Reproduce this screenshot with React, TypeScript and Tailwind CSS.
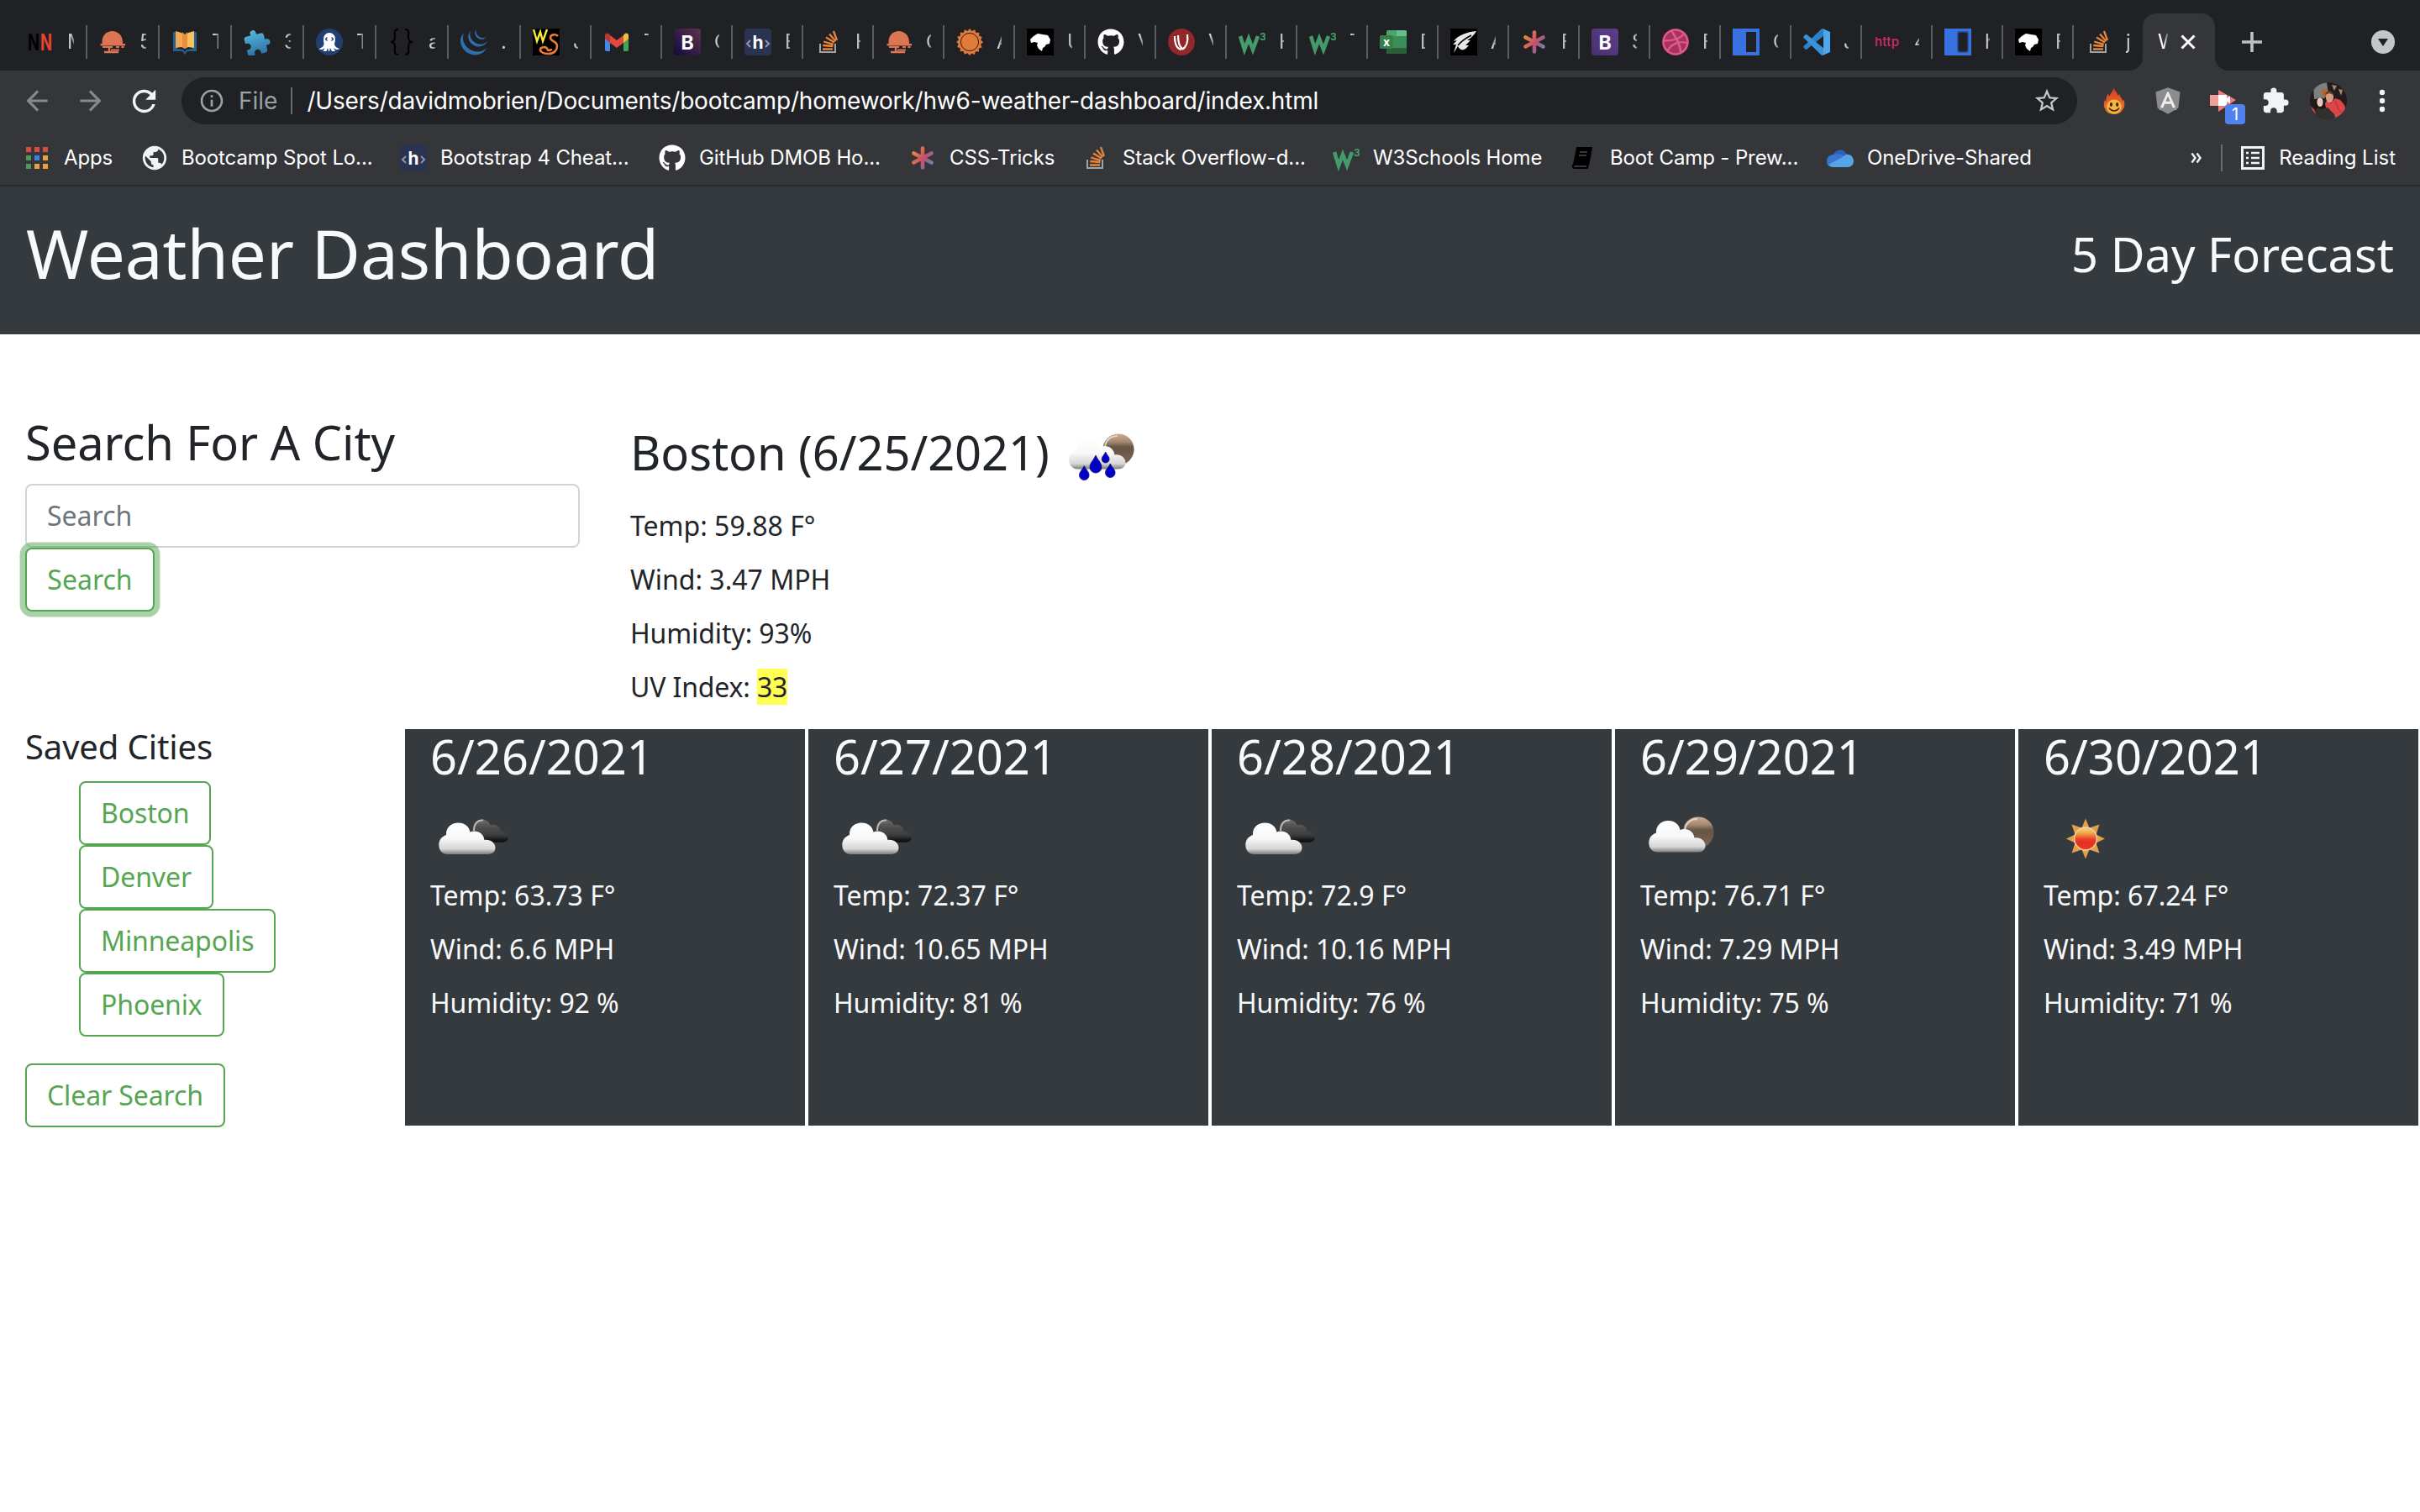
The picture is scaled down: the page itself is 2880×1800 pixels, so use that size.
import type { ReactNode } from "react";
import { FaAngular, FaDribbble, FaGithub } from "react-icons/fa";
import { SiJquery } from "react-icons/si";
import {
  MdArrowBack,
  MdArrowForward,
  MdExtension,
  MdInfoOutline,
  MdPublic,
  MdRefresh,
  MdStarBorder,
} from "react-icons/md";

/* ---------- favicons, 32 x 32 ---------- */

function Fav({ children }: { children: ReactNode }) {
  return (
    <svg viewBox="0 0 32 32" className="h-8 w-8 shrink-0">
      {children}
    </svg>
  );
}

const NN = () => (
  <Fav>
    <text x="1" y="26" fontSize="27" fontWeight="700" fontFamily="Inter, sans-serif" textLength="14" lengthAdjust="spacingAndGlyphs" fill="#000">N</text>
    <text x="16" y="26" fontSize="27" fontWeight="700" fontFamily="Inter, sans-serif" textLength="14" lengthAdjust="spacingAndGlyphs" fill="#e8432c">N</text>
  </Fav>
);

const Dome = () => (
  <Fav>
    <path d="M3.500 16C3.500 8 9 3 15.500 3S28 8 28 16v2h3v2.500H1.500V18h2z" fill="#dd7453" />
    <path d="M4 22h12M20 22h4M26.500 22h3M14 25.500h10" stroke="#dd7453" strokeWidth="2" fill="none" />
    <path d="M6 28h17M12 21v6" stroke="#dd7453" strokeWidth="2.400" fill="none" />
  </Fav>
);

const Book = () => (
  <Fav>
    <path d="M2 4h5v20l7 1 2 3 2-3 7-1V4h5v23H19l-3 4-3-4H2z" fill="#24618f" />
    <path d="M5 3l7 2 4 4v15l-4-2-7 1z" fill="#f3a851" />
    <path d="M27 3l-7 2-4 4v15l4-2 7 1z" fill="#f5c25b" />
    <path d="M13 4l3 3 3-3v18l-3 2-3-2z" fill="#e88f3c" />
  </Fav>
);

const PuzzleBlue = () => (
  <Fav>
    <defs>
      <linearGradient id="pz" x1="0" y1="0" x2="0" y2="1">
        <stop offset="0" stopColor="#55b8d8" />
        <stop offset="1" stopColor="#2f74a8" />
      </linearGradient>
    </defs>
    <g transform="translate(-1 0) rotate(-14 16 16) scale(1.4)">
      <path d="M20.500 11H19V7c0-1.100-.900-2-2-2h-4V3.500a2.500 2.500 0 0 0-5 0V5H4c-1.100 0-1.990.900-1.990 2v3.800H3.500c1.490 0 2.700 1.210 2.700 2.700s-1.210 2.700-2.700 2.700H2V20c0 1.100.900 2 2 2h3.800v-1.500c0-1.490 1.210-2.700 2.700-2.700s2.700 1.210 2.700 2.700V22H17c1.100 0 2-.900 2-2v-4h1.500a2.500 2.500 0 0 0 0-5z" fill="url(#pz)" />
    </g>
  </Fav>
);

const Octopus = () => (
  <Fav>
    <circle cx="16" cy="16" r="16" fill="#203f72" />
    <path d="M9 12a7 7 0 0 1 14 0c0 3-1 5-1 7 1 3 3 4 6 5-2 2-5 1-7-1l2 4h-4l-2-4-1 4h-1l-1-4-1.500 4h-4l2-4c-2 2-5 3-7 1 3-1 5-2 6-5 0-2-.500-4-.500-7z" fill="#fff" />
    <path d="M13.500 10.500l-2 2 2 2M18.500 10.500l2 2-2 2" stroke="#203f72" strokeWidth="1.400" fill="none" />
  </Fav>
);

const Braces = () => (
  <Fav>
    <path d="M12 1C6 1 8 6 8 10s-1 6-5 6c4 0 5 2 5 6s-2 9 4 9M20 1c6 0 4 5 4 9s1 6 5 6c-4 0-5 2-5 6s2 9-4 9" fill="none" stroke="#000" strokeWidth="2" />
  </Fav>
);

const Jquery = () => <SiJquery className="h-8 w-8 shrink-0 text-[#2f6fae]" />;

const WS = () => (
  <Fav>
    <rect width="32" height="32" fill="#000" />
    <path d="M1 1l4 14 4-11 3 11 5-14" fill="none" stroke="#f7ee3c" strokeWidth="2.400" />
    <path d="M30 9c-3-3-9-2-9 2 0 5 8 3 8 10 0 4-3 9-10 9-6 0-10-2-10-5 0-3 7-4 8-1s5 2 5 0" fill="none" stroke="#ec7a33" strokeWidth="2.600" />
  </Fav>
);

const Gmail = () => (
  <Fav>
    <path d="M2 8v17a2 2 0 0 0 2 2h4V13z" fill="#4a86e8" />
    <path d="M30 8v17a2 2 0 0 1-2 2h-4V13z" fill="#45a356" />
    <path d="M8 8v9l8 6 8-6V8l-8 6z" fill="#e34a3b" />
    <path d="M2 8v4l6 5V8L6.500 6C4.500 4.500 2 6 2 8z" fill="#b8382b" />
    <path d="M30 8v4l-6 5V8l1.500-2C27.500 4.500 30 6 30 8z" fill="#f3bd42" />
  </Fav>
);

const Letter = ({ bg, bg2 }: { bg: string; bg2: string }) => {
  const id = "b" + bg.slice(1);
  return (
    <Fav>
      <defs>
        <linearGradient id={id} x1="0" y1="1" x2="1" y2="0">
          <stop offset="0" stopColor={bg} />
          <stop offset="1" stopColor={bg2} />
        </linearGradient>
      </defs>
      <rect width="32" height="32" rx="4" fill={`url(#${id})`} />
      <text x="16" y="24.500" textAnchor="middle" fontSize="23" fontWeight="700" fontFamily="Inter, sans-serif" fill="#fff">B</text>
    </Fav>
  );
};

const AngleH = () => (
  <Fav>
    <rect width="32" height="32" rx="4" fill="#2a3450" />
    <text x="16" y="24" textAnchor="middle" fontSize="21" fontWeight="700" fontFamily="Inter, sans-serif" fill="#fff">h</text>
    <path d="M7 14l-4 4 4 4M25 14l4 4-4 4" fill="none" stroke="#8f97ab" strokeWidth="2" />
  </Fav>
);

const Stack = () => (
  <Fav>
    <path d="M6 18v10h18V18" fill="none" stroke="#a0a3a8" strokeWidth="2" />
    <g stroke="#e6843b" strokeWidth="2.300">
      <path d="M9 24.500h12M9.300 20l12 1M10.300 15.500l11.500 3.300M13 10.500l10 6M17 6.500l7.500 8.500M22 3l4 11" />
    </g>
  </Fav>
);

const SunGear = () => (
  <Fav>
    <path
      d="M16 0l2.600 3 3.600-1.700 1.200 3.800 4-.300-.300 4 3.700 1.200-1.600 3.500 2.800 2.700-3 2.600 1.600 3.600-3.800 1.200.300 4-4-.300-1.300 3.700-3.500-1.600L16 32l-2.600-2.800-3.600 1.600-1.200-3.800-4 .300.300-4-3.800-1.200L2.700 18 0 16l3-2.600L1.200 9.800 5 8.600l-.300-4 4 .300L10 1.200l3.500 1.700z"
      fill="#e27a3a"
    />
    <circle cx="16" cy="16" r="10.600" fill="none" stroke="#202124" strokeWidth="1" />
  </Fav>
);

const Head = () => (
  <Fav>
    <rect width="32" height="32" fill="#000" />
    <path d="M4 13l4-4 5-3 6 1 6 1 3 5-1 5-4 1-2 3-2 1-1 4-4-3-2-4 1-3-4-1-4 1z" fill="#fff" />
  </Fav>
);

const Github = () => <FaGithub className="h-8 w-8 shrink-0 text-white" />;

const RedSwirl = () => (
  <Fav>
    <circle cx="16" cy="16" r="16" fill="#93282a" />
    <path d="M8 9c0 9 2 15 8 16M12 8c0 8 1 13 5 16M23 7c1 7 0 14-6 18" stroke="#fff" strokeWidth="2.200" fill="none" />
  </Fav>
);

const W3 = () => (
  <Fav>
    <path d="M2 9l5 16 5-13 5 13 6-16" fill="none" stroke="#459a6c" strokeWidth="4.600" />
    <text x="25" y="14" fontSize="12" fontWeight="700" fontFamily="Inter, sans-serif" fill="#459a6c">3</text>
  </Fav>
);

const Excel = () => (
  <Fav>
    <rect x="8" y="2" width="24" height="28" rx="2" fill="#3a8f58" />
    <path d="M20 2h10a2 2 0 0 1 2 2v5H20z" fill="#63c08a" />
    <path d="M8 4a2 2 0 0 1 2-2h10v7H8z" fill="#4ba36d" />
    <path d="M8 23h24v5a2 2 0 0 1-2 2H10a2 2 0 0 1-2-2z" fill="#2a5f39" />
    <rect x="0" y="8" width="16" height="16" rx="1.500" fill="#367f48" />
    <text x="8" y="21" textAnchor="middle" fontSize="14" fontWeight="700" fontFamily="Inter, sans-serif" fill="#fff">x</text>
  </Fav>
);

const Feather = () => (
  <Fav>
    <rect width="32" height="32" fill="#000" />
    <path d="M31 3C20 4 9 8 4 15l4-1-5 5 4 0-3 10 5-8c3 6 8 6 13-1l-4 0 6-6-4 0c5-3 8-6 11-11z" fill="#e8e8e8" />
    <path d="M9 20c5-6 10-9 16-12" stroke="#000" strokeWidth="1.600" fill="none" />
  </Fav>
);

const Asterisk = () => (
  <Fav>
    <defs>
      <linearGradient id="ast" gradientUnits="userSpaceOnUse" x1="2" y1="8" x2="30" y2="26">
        <stop offset="0.1" stopColor="#e9883e" />
        <stop offset="0.5" stopColor="#c9506b" />
        <stop offset="0.75" stopColor="#8c6a94" />
        <stop offset="1" stopColor="#4fb3c4" />
      </linearGradient>
    </defs>
    <g stroke="url(#ast)" strokeWidth="4.600" strokeLinecap="round">
      <path d="M16.010 4.500L16 27.500M5.500 10.500l21 11M5.500 21.500l21-11" />
    </g>
  </Fav>
);

const Dribbble = () => (
  <span className="flex h-8 w-8 shrink-0 items-center justify-center rounded-full bg-[#a8325f]">
    <FaDribbble className="h-8 w-8 text-[#de5b8b]" />
  </span>
);

const BlueBox = ({ soft }: { soft?: boolean }) => (
  <Fav>
    <rect width="32" height="32" fill="#3871e0" />
    <rect x="16" y="4" width="12" height="24" rx={soft ? 2 : 0} fill="#202124" stroke={soft ? "#294a8c" : "none"} strokeWidth="1.500" />
  </Fav>
);

const VsCode = () => (
  <Fav>
    <path d="M0 21.500L22 0l3 1v7L4 25l-2-.500z" fill="#2f7fc4" />
    <path d="M0 10.500L22 32l3-1v-7L4 7l-2 .500z" fill="#3a93da" />
    <path d="M23 0l9 4v24l-9 4 1-2V2z" fill="#4fa8ec" />
  </Fav>
);

const Http = () => (
  <Fav>
    <text x="1" y="21" fontSize="15" fontWeight="500" fontFamily="Inter, sans-serif" fill="#d12f68" textLength="29">http</text>
  </Fav>
);

const tabs: { icon: ReactNode; label: string }[] = [
  { icon: <NN />, label: "M" },
  { icon: <Dome />, label: "5" },
  { icon: <Book />, label: "T" },
  { icon: <PuzzleBlue />, label: "3" },
  { icon: <Octopus />, label: "T" },
  { icon: <Braces />, label: "a" },
  { icon: <Jquery />, label: "." },
  { icon: <WS />, label: "J" },
  { icon: <Gmail />, label: "T" },
  { icon: <Letter bg="#120a3c" bg2="#5e3350" />, label: "C" },
  { icon: <AngleH />, label: "B" },
  { icon: <Stack />, label: "H" },
  { icon: <Dome />, label: "C" },
  { icon: <SunGear />, label: "A" },
  { icon: <Head />, label: "U" },
  { icon: <Github />, label: "V" },
  { icon: <RedSwirl />, label: "V" },
  { icon: <W3 />, label: "H" },
  { icon: <W3 />, label: "T" },
  { icon: <Excel />, label: "D" },
  { icon: <Feather />, label: "A" },
  { icon: <Asterisk />, label: "F" },
  { icon: <Letter bg="#4a2f70" bg2="#5c3f8c" />, label: "S" },
  { icon: <Dribbble />, label: "F" },
  { icon: <BlueBox />, label: "C" },
  { icon: <VsCode />, label: "J" },
  { icon: <Http />, label: "4" },
  { icon: <BlueBox soft />, label: "h" },
  { icon: <Head />, label: "F" },
  { icon: <Stack />, label: "j" },
];

function TabStrip() {
  return (
    <div className="flex h-[84px] bg-[#202124] pt-4 pl-[18px]">
      {tabs.map((t, i) => (
        <div
          key={i}
          className={
            i < 7
              ? "flex h-[68px] w-[86px] shrink-0 items-center"
              : i < 29
                ? "flex h-[68px] w-[84px] shrink-0 items-center"
                : "flex h-[68px] w-[82px] shrink-0 items-center"
          }
        >
          <div className="flex flex-1 items-center gap-4 pl-[14px]">
            {t.icon}
            <span
              className={
                i < 7
                  ? "w-[8px] overflow-hidden text-2xl leading-8 text-[#d0d2d6] [mask-image:linear-gradient(to_right,#000_40%,#0008)]"
                  : "w-[6px] overflow-hidden text-2xl leading-8 text-[#d0d2d6] [mask-image:linear-gradient(to_right,#000_40%,#0008)]"
              }
            >
              {t.label}
            </span>
          </div>
          {i < 29 && <div className="h-10 w-[2px] bg-[#5b5d60]" />}
        </div>
      ))}
      <div className="relative flex h-[68px] w-[86px] shrink-0 items-center">
        <svg viewBox="0 0 118 68" className="absolute top-0 -left-4 h-[68px] w-[118px]">
          <path d="M0 68A16 16 0 0 0 16 52V16A16 16 0 0 1 32 0H86A16 16 0 0 1 102 16V52A16 16 0 0 0 118 68Z" fill="#35363a" />
        </svg>
        <span className="relative ml-[18px] w-[12px] overflow-hidden text-2xl leading-8 text-white [mask-image:linear-gradient(to_right,#000_60%,#0003)]">
          W
        </span>
        <svg viewBox="0 0 18 18" className="relative ml-[15px] h-[18px] w-[18px]">
          <path d="M1.500 1.500l15 15M16.500 1.500l-15 15" stroke="#fff" strokeWidth="3" />
        </svg>
      </div>
      <div className="flex h-[68px] flex-1 items-center justify-between pr-[30px] pl-8">
        <svg viewBox="0 0 24 24" className="h-6 w-6">
          <path d="M12 0v24M0 12h24" stroke="#bdc1c6" strokeWidth="3.600" />
        </svg>
        <svg viewBox="0 0 28 28" className="h-7 w-7">
          <circle cx="14" cy="14" r="14" fill="#c3c5c9" />
          <path d="M8 10h12l-6 9z" fill="#202124" />
        </svg>
      </div>
    </div>
  );
}

function Flame() {
  return (
    <svg viewBox="2 0 28 34" preserveAspectRatio="none" className="h-[34px] w-[26px]">
      <defs>
        <linearGradient id="fl" x1="0" y1="0" x2="0" y2="1">
          <stop offset="0" stopColor="#d93a1c" />
          <stop offset="0.55" stopColor="#e8602a" />
          <stop offset="1" stopColor="#d97a1e" />
        </linearGradient>
      </defs>
      <path d="M15 1c1 4 5 5 6 10l2-2c0 3 3 5 4 8l2-1c0 4 1 7-1 10-3 5-6 7-12 7S6 31 4 26c-2-3-1-6 0-10l2 2c-1-4 1-6 2-10l2 4c1-4 5-6 5-11z" fill="url(#fl)" />
      <ellipse cx="16" cy="24" rx="9.500" ry="8.500" fill="#f4b63e" />
      <ellipse cx="12.200" cy="21.500" rx="1.700" ry="2.400" fill="#3a2212" />
      <ellipse cx="20" cy="21.500" rx="1.700" ry="2.400" fill="#3a2212" />
      <path d="M9.500 25.500c3 4.500 10 4.500 13 0" stroke="#3a2212" strokeWidth="1.500" fill="none" />
    </svg>
  );
}

function Avatar() {
  return (
    <svg viewBox="0 0 44 44" className="h-11 w-11">
      <clipPath id="av">
        <circle cx="22" cy="22" r="22" />
      </clipPath>
      <g clipPath="url(#av)">
        <rect width="44" height="44" fill="#241c1a" />
        <path d="M4 3l16-3 2 13-5 6-12 1z" fill="#7d807c" />
        <path d="M13 9l8-1 1 7-6 2z" fill="#b4662c" />
        <path d="M26 3l3 7 3-6zM34 8l3 8 2-7z" fill="#a08a72" />
        <path d="M17 27l3-5 5 3 5-6 6 2 5 6 2 6-6 8-9 4-9-6z" fill="#dc4649" />
        <path d="M30 22l3 8 4 6" stroke="#a82d33" strokeWidth="1" fill="none" />
        <ellipse cx="23.500" cy="18" rx="4.600" ry="6.300" fill="#d99a80" />
        <path d="M18 15c0-6 9-6 10 0l-5-2z" fill="#5b4336" />
        <path d="M6 29c-1-14 12-15 12-3l2 8-12 2z" fill="#1e1512" />
        <ellipse cx="12" cy="23.500" rx="3.600" ry="5.500" fill="#e6c9bb" />
        <path d="M3 36l7-6 3 2 8-2 8 8 2 6H3z" fill="#30312f" />
        <path d="M0 28l5 4 2 6-7-2z" fill="#d9474a" />
      </g>
    </svg>
  );
}

function Toolbar() {
  return (
    <div className="flex h-[72px] items-center bg-[#35363a] pl-[25px]">
      <MdArrowBack className="h-[38px] w-[38px] text-[#86888b]" />
      <MdArrowForward className="ml-[26px] h-[38px] w-[38px] text-[#86888b]" />
      <MdRefresh className="ml-[24px] h-[41px] w-[41px] text-[#f1f3f4]" />
      <div className="ml-[24px] flex h-14 w-[2256px] items-center rounded-full bg-[#202124] pl-[20px]">
        <MdInfoOutline className="h-8 w-8 text-[#9aa0a6]" />
        <span className="ml-[16px] text-[28px] text-[#9aa0a6]">File</span>
        <div className="ml-[16px] h-8 w-[2px] bg-[#6a6c70]" />
        <span className="ml-[17px] text-[28px] tracking-[-0.19px] whitespace-nowrap text-white">
          /Users/davidmobrien/Documents/bootcamp/homework/hw6-weather-dashboard/index.html
        </span>
        <MdStarBorder className="mr-[19px] ml-auto h-[34px] w-[34px] text-[#c4c7cb]" />
      </div>
      <div className="ml-[31px]">
        <Flame />
      </div>
      <div className="ml-[33px] flex h-9 w-9 items-center justify-center">
        <FaAngular className="h-[36px] w-[36px] rounded-b-2xl bg-[linear-gradient(#eee,#eee)] bg-[length:20px_22px] bg-center bg-no-repeat text-[#8a8c8e]" />
      </div>
      <div className="relative ml-[30px] h-9 w-9">
        <svg viewBox="0 0 36 36" className="h-9 w-9">
          <path d="M2 11h10V5l21 12-21 14v-7H2z" fill="#ea7f7d" />
          <path d="M2 11h10v13H2z" fill="#f0a09c" />
          <path d="M12 11h10v4l4-3v9l-4-2v5H12z" fill="#fff" />
        </svg>
        <span className="absolute top-[22px] left-[20px] flex h-6 w-6 items-center justify-center rounded-[4px] bg-[#5181ec] text-[20px] leading-6 text-white">
          1
        </span>
      </div>
      <MdExtension className="ml-[27px] h-[34px] w-[34px] text-[#f1f3f4]" />
      <div className="ml-[24px]">
        <Avatar />
      </div>
      <svg viewBox="0 0 8 28" className="ml-[38px] h-7 w-2">
        <circle cx="4" cy="4" r="3.200" fill="#f1f3f4" />
        <circle cx="4" cy="14" r="3.200" fill="#f1f3f4" />
        <circle cx="4" cy="24" r="3.200" fill="#f1f3f4" />
      </svg>
    </div>
  );
}

function AppsGrid() {
  const colors = ["#dd4b3e", "#dd4b3e", "#dd4b3e", "#4c9b5a", "#3f7fe8", "#e5a53a", "#4c9b5a", "#e5a53a", "#e5a53a"];
  return (
    <svg viewBox="0 0 26 26" className="h-[26px] w-[26px]">
      {colors.map((c, i) => (
        <rect key={i} x={(i % 3) * 10} y={Math.floor(i / 3) * 10} width="6" height="6" fill={c} />
      ))}
    </svg>
  );
}

function NotebookIcon() {
  return (
    <svg viewBox="0 0 32 32" className="h-8 w-8">
      <path d="M10 4h17l-4 20H6z" fill="#000" stroke="#000" strokeWidth="2" strokeLinejoin="round" />
      <path d="M6 23c-2 3-1 5 1 5h15l4-18" fill="none" stroke="#000" strokeWidth="2" />
      <path d="M13 9h9M12 13h9" stroke="#4a4b4e" strokeWidth="1.500" />
    </svg>
  );
}

function OneDrive() {
  return (
    <svg viewBox="0 0 32 22" className="h-[22px] w-8">
      <path d="M7 9C9 1 20-2 24 7l-8 8z" fill="#2b62b8" />
      <path d="M8 7C3 7 0 11 0 15c0 3 1 5 3 6l20-11C19 7 13 5 8 7z" fill="#3777cf" />
      <path d="M23 7c6-1 9 4 9 8s-3 7-7 7H7c-2 0-4-1-5-3l15-8z" fill="#55a5e6" />
    </svg>
  );
}

const bookmarks: { icon: ReactNode; label: string; cls: string; gap: string }[] = [
  { icon: <AppsGrid />, label: "Apps", cls: "flex w-[136px] items-center", gap: "ml-[19px]" },
  { icon: <MdPublic className="h-[34px] w-[34px] text-[#f1f3f4]" />, label: "Bootcamp Spot Lo...", cls: "flex w-[309px] items-center", gap: "ml-[15px]" },
  { icon: <AngleH />, label: "Bootstrap 4 Cheat...", cls: "flex w-[308px] items-center", gap: "ml-[16px]" },
  { icon: <Github />, label: "GitHub DMOB Ho...", cls: "flex w-[298px] items-center", gap: "ml-[16px]" },
  { icon: <Asterisk />, label: "CSS-Tricks", cls: "flex w-[206px] items-center", gap: "ml-[16px]" },
  { icon: <Stack />, label: "Stack Overflow-d...", cls: "flex w-[298px] items-center", gap: "ml-[16px]" },
  { icon: <W3 />, label: "W3Schools Home", cls: "flex w-[281px] items-center", gap: "ml-[16px]" },
  { icon: <NotebookIcon />, label: "Boot Camp - Prew...", cls: "flex w-[307px] items-center", gap: "ml-[17px]" },
  { icon: <OneDrive />, label: "OneDrive-Shared", cls: "flex items-center", gap: "ml-[16px]" },
];

function Bookmarks() {
  return (
    <div className="flex h-[66px] items-center border-b-2 border-[#28292b] bg-[#35363a] pr-[29px] pl-[31px] text-2xl tracking-[-0.12px] whitespace-nowrap text-white">
      {bookmarks.map((b) => (
        <div key={b.label} className={b.cls}>
          {b.icon}
          <span className={b.gap}>{b.label}</span>
        </div>
      ))}
      <svg viewBox="0 0 14 14" className="ml-auto h-[14px] w-[14px]">
        <path d="M1.500 1.500l4 5.500-4 5.500M7.500 1.500l4 5.500-4 5.500" fill="none" stroke="#f1f3f4" strokeWidth="2.400" />
      </svg>
      <div className="ml-[22px] h-8 w-[2px] bg-[#6a6c70]" />
      <svg viewBox="0 0 28 28" className="ml-[22px] h-7 w-7">
        <rect x="1.500" y="1.500" width="25" height="25" fill="none" stroke="#f1f3f4" strokeWidth="3" />
        <path d="M6 8h3M6 14h3M6 20h3M12 8h10M12 14h10M12 20h10" stroke="#f1f3f4" strokeWidth="2.600" />
      </svg>
      <span className="ml-[17px] tracking-normal">Reading List</span>
    </div>
  );
}

/* ---------- weather pictures, 100 x 100 ---------- */

function WeatherDefs() {
  return (
    <svg className="absolute h-0 w-0">
      <defs>
        <linearGradient id="cloudFill" gradientUnits="userSpaceOnUse" x1="0" y1="28" x2="0" y2="67">
          <stop offset="0" stopColor="#ffffff" />
          <stop offset="0.5" stopColor="#f8f8f8" />
          <stop offset="0.82" stopColor="#d6d6d6" />
          <stop offset="1" stopColor="#777" />
        </linearGradient>
        <linearGradient id="darkFill" gradientUnits="userSpaceOnUse" x1="0" y1="28" x2="0" y2="55">
          <stop offset="0" stopColor="#6a6a6a" />
          <stop offset="0.35" stopColor="#4e4e4e" />
          <stop offset="0.7" stopColor="#3a3a3a" />
          <stop offset="1" stopColor="#000" />
        </linearGradient>
        <linearGradient id="moonFill" x1="0" y1="0" x2="0" y2="1">
          <stop offset="0" stopColor="#d2ab8c" />
          <stop offset="0.25" stopColor="#a58a75" />
          <stop offset="0.42" stopColor="#665544" />
          <stop offset="1" stopColor="#7d6552" />
        </linearGradient>
        <linearGradient id="sunFill" x1="0" y1="0" x2="0" y2="1">
          <stop offset="0" stopColor="#f6d36a" />
          <stop offset="0.22" stopColor="#f2b050" />
          <stop offset="0.5" stopColor="#e8492a" />
          <stop offset="0.65" stopColor="#e5301f" />
          <stop offset="1" stopColor="#e93a25" />
        </linearGradient>
        <filter id="soft" x="-10%" y="-10%" width="120%" height="120%">
          <feGaussianBlur stdDeviation="0.7" />
        </filter>
      </defs>
    </svg>
  );
}

const CloudShape = () => (
  <path
    d="M21 66.500C14 66.500 10.300 61.500 10.300 55.500C10.300 49.500 13.500 45.500 19 43.500C18.500 34.500 25 29 33.500 29C41 29 46 33 47.500 40C55 37 63.500 41 64.500 49.500C71.500 48.500 77.500 53 77.500 59C77.500 63.500 74 66.500 68 66.500Z"
    fill="url(#cloudFill)"
  />
);

const Moon = () => (
  <>
    <circle cx="69" cy="43" r="18.600" fill="url(#moonFill)" />
    <path d="M53 42C53 32 60 27 68 27" fill="none" stroke="#e6d3c6" strokeWidth="2" />
  </>
);

const Drop = ({ x, top, bottom, w }: { x: number; top: number; bottom: number; w: number }) => (
  <path
    d={`M${x} ${top}C${x + w * 0.4} ${top + w * 0.9} ${x + w} ${bottom - w * 1.7} ${x + w} ${bottom - w}A${w} ${w} 0 0 1 ${x - w} ${bottom - w}C${x - w} ${bottom - w * 1.7} ${x - w * 0.4} ${top + w * 0.9} ${x} ${top}Z`}
    fill="#0505c8"
    stroke="#12125e"
    strokeWidth="0.800"
  />
);

type Weather = "clouds" | "moon" | "sun" | "rain";

function WeatherIcon({ kind }: { kind: Weather }) {
  return (
    <svg viewBox="0 0 100 100" className="h-[100px] w-[100px] shrink-0">
      <g filter="url(#soft)">
        {kind === "clouds" && (
          <>
            <path d="M50 46C49 34 54 28 61 27.500C66 27.500 70 30 71.500 34C78 32.500 83 36 84 41.500C90 41.500 93 45 93 48.500C93 52 90.500 54.500 86 54.500H60Z" fill="url(#darkFill)" />
            <path d="M52 41C52 33 56 28 63 28.500" fill="none" stroke="#b9b9b9" strokeWidth="2" />
            <g transform="translate(0 2.500)">
              <CloudShape />
            </g>
          </>
        )}
        {kind === "moon" && (
          <>
            <Moon />
            <CloudShape />
          </>
        )}
        {kind === "rain" && (
          <>
            <Moon />
            <CloudShape />
            <Drop x={42} top={50} bottom={71} w={7} />
            <Drop x={53.7} top={46} bottom={59} w={4.4} />
            <Drop x={28.3} top={62.5} bottom={79.5} w={5.8} />
            <Drop x={59.3} top={60} bottom={76.5} w={5.8} />
          </>
        )}
        {kind === "sun" && (
          <>
            <path
              d="M50 26.500L54.500 37.500L66.500 33.500L62.500 45.500L73 50.500L62.500 55.500L66.500 67.500L54.500 63.500L50 74.500L45.500 63.500L33.500 67.500L37.500 55.500L27 50.500L37.500 45.500L33.500 33.500L45.500 37.500Z"
              fill="#e3a04c"
            />
            <circle cx="50" cy="50.500" r="13.400" fill="url(#sunFill)" stroke="#f3c9a0" strokeWidth="1.600" />
          </>
        )}
      </g>
    </svg>
  );
}

const days: { date: string; icon: Weather; temp: string; wind: string; humidity: string }[] = [
  { date: "6/26/2021", icon: "clouds", temp: "63.73", wind: "6.6", humidity: "92" },
  { date: "6/27/2021", icon: "clouds", temp: "72.37", wind: "10.65", humidity: "81" },
  { date: "6/28/2021", icon: "clouds", temp: "72.9", wind: "10.16", humidity: "76" },
  { date: "6/29/2021", icon: "moon", temp: "76.71", wind: "7.29", humidity: "75" },
  { date: "6/30/2021", icon: "sun", temp: "67.24", wind: "3.49", humidity: "71" },
];

function OutlineButton({ children, focused }: { children: ReactNode; focused?: boolean }) {
  return (
    <button
      className={
        focused
          ? "relative block h-[76px] w-[154px] rounded-lg border-2 border-[#55a651] bg-white text-center text-[32px] leading-[48px] text-[#55a651] shadow-[0_0_0_6.4px_rgba(85,166,81,0.5)]"
          : "block h-[76px] rounded-lg border-2 border-[#55a651] px-6 text-[32px] leading-[48px] tracking-[-0.12px] text-[#55a651]"
      }
    >
      {children}
    </button>
  );
}

function Dashboard() {
  return (
    <div className="font-['Noto_Sans',sans-serif] text-[32px] leading-[48px] text-[#212529]">
      <header className="flex h-[176px] items-start justify-between bg-[#353a3e] pr-[31px] pl-[31px] text-[#f8f9fa]">
        <h1 className="mt-[31px] text-[80px] leading-[96px] tracking-[-0.06px]">Weather Dashboard</h1>
        <h3 className="mt-[47px] text-[56px] leading-[67px]">5 Day Forecast</h3>
      </header>

      <section className="flex h-[466px]">
        <div className="w-[720px] px-[30px] pt-[95px]">
          <h3 className="text-[56px] leading-[67px] tracking-[-0.08px]">Search For A City</h3>
          <input
            placeholder="Search"
            className="mt-4 block h-[76px] w-[660px] rounded-lg border-2 border-[#ced4da] px-6 pb-[2px] text-[32px] placeholder:text-[#6c757d] placeholder:opacity-100"
          />
          <OutlineButton focused>Search</OutlineButton>
        </div>
        <div className="flex-1 pt-[107px] pl-[30px]">
          <div className="flex h-[67px] items-start">
            <h3 className="text-[56px] leading-[67px] tracking-[-0.06px]">Boston (6/25/2021)</h3>
            <div className="-mt-[13px] ml-[13px]">
              <WeatherIcon kind="rain" />
            </div>
          </div>
          <div className="mt-[30px] flex flex-col gap-4">
            <p>Temp: 59.88 F°</p>
            <p>Wind: 3.47 MPH</p>
            <p className="tracking-[-0.1px]">Humidity: 93%</p>
            <p className="tracking-[-0.15px]">
              UV Index: <span className="bg-[#ffff54]">33</span>
            </p>
          </div>
        </div>
      </section>

      <section className="flex">
        <aside className="w-[480px] px-[30px]">
          <h5 className="pt-px text-[40px] leading-[48px] tracking-[-0.12px]">Saved Cities</h5>
          <div className="mt-[17px] flex flex-col items-start pl-16">
            <OutlineButton>Boston</OutlineButton>
            <OutlineButton>Denver</OutlineButton>
            <OutlineButton>Minneapolis</OutlineButton>
            <OutlineButton>Phoenix</OutlineButton>
          </div>
          <div className="mt-8">
            <OutlineButton>Clear Search</OutlineButton>
          </div>
        </aside>
        <div className="mt-1 grid w-[2400px] grid-cols-5">
          {days.map((d) => (
            <div key={d.date} className="mx-[2px] h-[472px] bg-[#353a3e] pl-[30px] text-[#f8f9fa]">
              <h3 className="-mt-px text-[56px] leading-[67px]">{d.date}</h3>
              <div className="mt-[14px] -mb-[6px] h-[100px]">
                <WeatherIcon kind={d.icon} />
              </div>
              <div className="flex flex-col gap-4">
                <p>Temp: {d.temp} F°</p>
                <p className="tracking-[-0.06px]">Wind: {d.wind} MPH</p>
                <p className="tracking-[-0.1px]">Humidity: {d.humidity} %</p>
              </div>
            </div>
          ))}
        </div>
      </section>
    </div>
  );
}

export default function App() {
  return (
    <div className="min-h-[1800px] w-[2880px] overflow-hidden bg-white">
      <WeatherDefs />
      <div className="font-[Inter,sans-serif]">
        <TabStrip />
        <Toolbar />
        <Bookmarks />
      </div>
      <Dashboard />
    </div>
  );
}
